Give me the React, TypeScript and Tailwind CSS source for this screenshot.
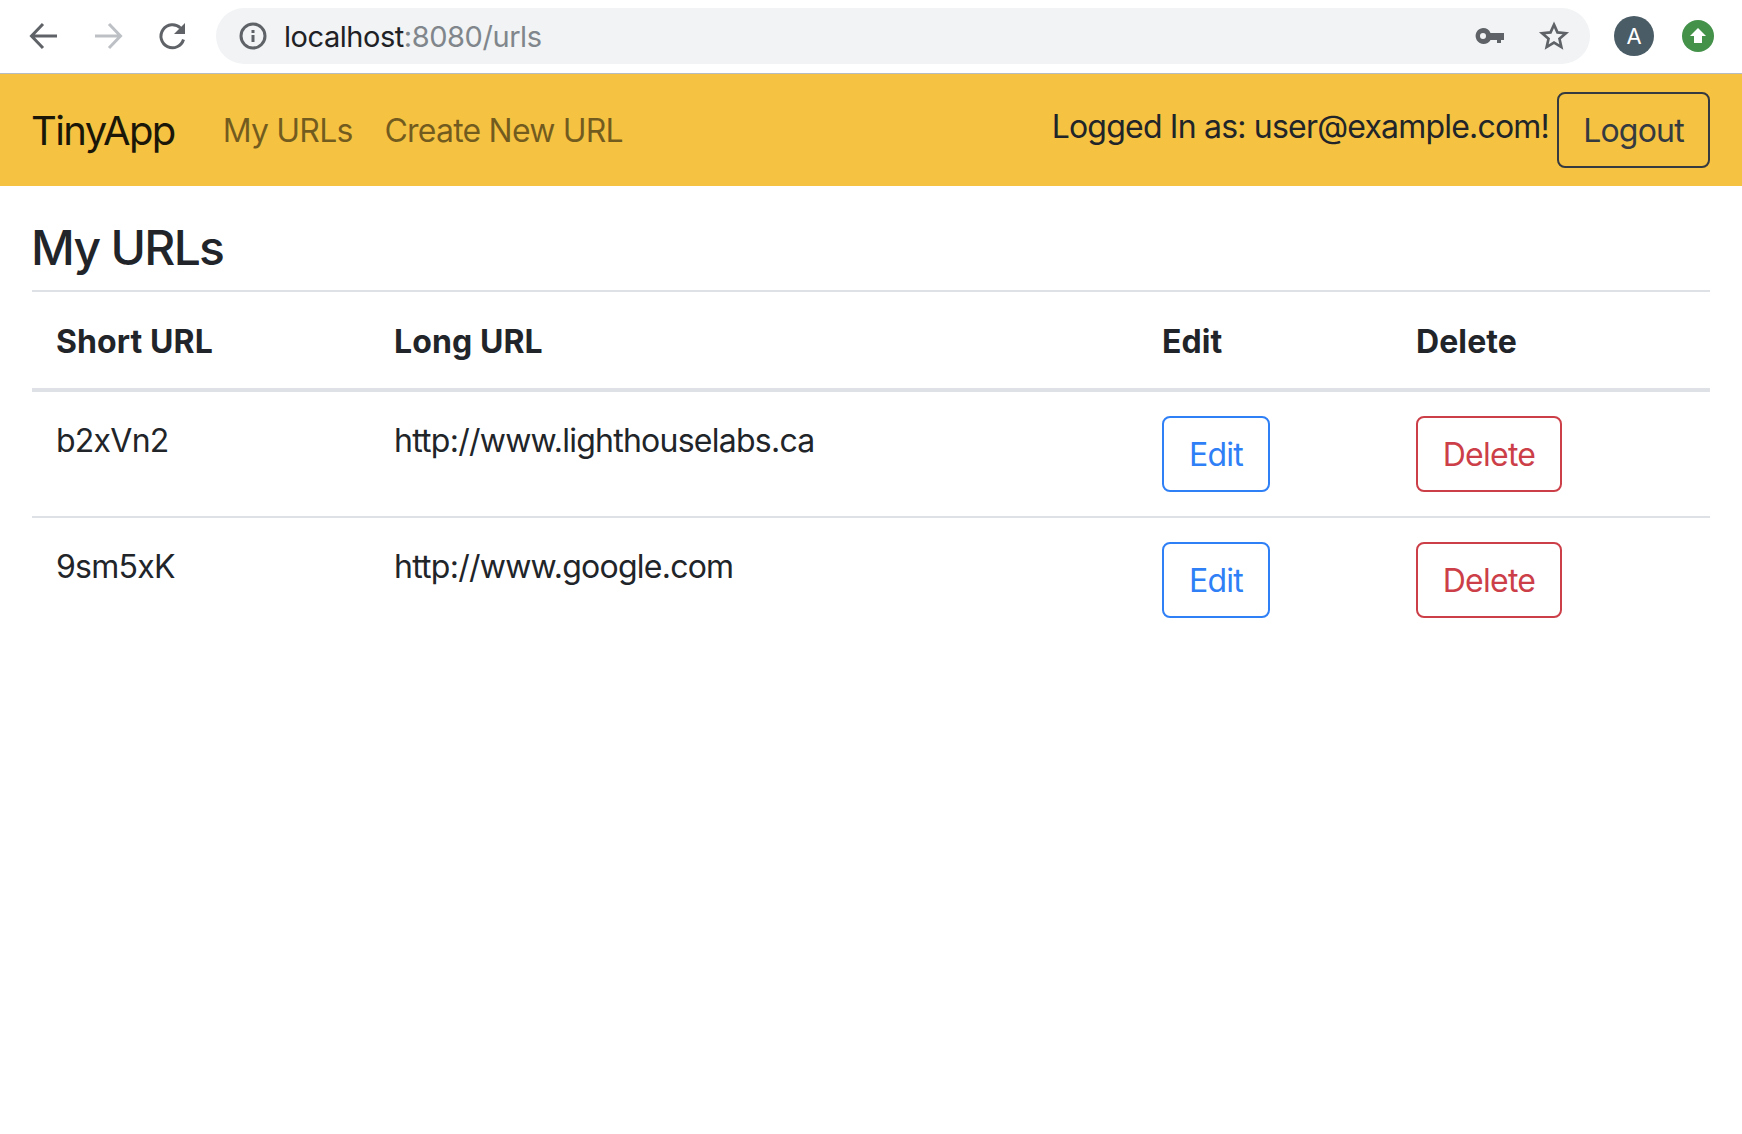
import React from "react";

const rows = [
  ["b2xVn2", "http://www.lighthouselabs.ca"],
  ["9sm5xK", "http://www.google.com"],
];

function Toolbar() {
  return (
    <div className="h-[73px] pb-[1px] flex items-center bg-white pl-[28px] pr-[28px]">
      <svg width="32" height="32" viewBox="0 0 32 32" fill="none" stroke="#5f6368" strokeWidth="3" className="shrink-0">
        <path d="M29 16H4M15 4L3.500 16 15 28" />
      </svg>
      <svg width="32" height="32" viewBox="0 0 32 32" fill="none" stroke="#bdc1c6" strokeWidth="3" className="ml-[32px] shrink-0">
        <path d="M3 16h25M17 4l11.500 12L17 28" />
      </svg>
      <svg width="32" height="32" viewBox="0 0 32 32" fill="none" className="ml-[33px] shrink-0">
        <path d="M26.500 19.500A11.500 11.500 0 1 1 23.500 8" stroke="#5f6368" strokeWidth="3" />
        <path d="M28 3v11H17z" fill="#5f6368" />
      </svg>
      <div className="ml-[27px] h-[56px] flex-1 rounded-[28px] bg-[#f1f3f4] flex items-center pl-[22px] pr-[20px]">
        <svg width="30" height="30" viewBox="0 0 30 30" fill="none" className="shrink-0">
          <circle cx="15" cy="15" r="12" stroke="#5f6368" strokeWidth="3" />
          <path d="M13.500 9h3v3h-3zM13.500 14h3v7h-3z" fill="#5f6368" />
        </svg>
        <div className="ml-[16px] text-[29px] tracking-[-0.45px] leading-none font-['Inter',sans-serif] text-[#202124]">
          localhost<span className="text-[#80868b]">:8080/urls</span>
        </div>
        <div className="flex-1" />
        <svg width="30" height="20" viewBox="0 0 30 20" fill="#5f6368" className="shrink-0">
          <path fillRule="evenodd" d="M8 2a8 8 0 0 1 7.500 5H29v7h-3v3h-4v-3h-6.500A8 8 0 1 1 8 2zm0 5a3 3 0 1 0 0 6 3 3 0 0 0 0-6z" />
        </svg>
        <svg width="32" height="32" viewBox="0 0 24 24" fill="none" stroke="#5f6368" strokeWidth="2" className="ml-[33px] shrink-0">
          <path d="M12 3.500l2.600 5.800 6.300.6-4.800 4.200 1.400 6.200L12 17l-5.500 3.300 1.400-6.200L3.100 9.900l6.300-.6z" />
        </svg>
      </div>
      <div className="ml-[24px] w-[40px] h-[40px] rounded-full bg-[#4a5c66] flex items-center justify-center text-white text-[22px] font-['Inter',sans-serif] shrink-0">
        A
      </div>
      <div className="ml-[28px] w-[32px] h-[32px] rounded-full bg-[#44914a] flex items-center justify-center shrink-0">
        <svg width="18" height="18" viewBox="0 0 18 18" fill="#fff">
          <path d="M9 1l8 8h-4v7H5V9H1z" />
        </svg>
      </div>
    </div>
  );
}

function Navbar() {
  return (
    <nav className="h-[113px] border-t border-[#b5bcc2] bg-[#f5c242] flex items-center pl-[31px] pr-[32px] text-[32px] leading-[48px] tracking-[-0.8px]">
      <span className="mt-[2px] text-[40px] tracking-[-1.6px] text-[#1a1608]">TinyApp</span>
      <span className="mt-[2px] ml-[48px] text-[#1a1608]/60">My URLs</span>
      <span className="mt-[2px] ml-[32px] text-[#1a1608]/60">Create New URL</span>
      <div className="flex-1" />
      <span className="text-[#212529] mb-[6px]">Logged In as: user@example.com!</span>
      <button className="ml-[8px] w-[153px] h-[76px] pt-[2px] rounded-[8px] border-2 border-[#343a40] text-[#343a40]">Logout</button>
    </nav>
  );
}

export default function App() {
  return (
    <div className="min-h-[1134px] bg-white text-[#212529] font-['Inter',sans-serif]">
      <Toolbar />
      <Navbar />
      <main className="px-[32px]">
        <h3 className="pt-[34px] pb-[14px] text-[48px] tracking-[-1.7px] leading-[56px] font-medium border-b-2 border-[#dee2e6]">
          <span className="-ml-[1px] block">My URLs</span>
        </h3>
        <table className="w-full table-fixed text-[32px] leading-[48px] text-left">
          <colgroup>
            <col className="w-[338px]" />
            <col className="w-[768px]" />
            <col className="w-[254px]" />
            <col />
          </colgroup>
          <thead className="tracking-[0.1px]">
            <tr className="border-b-4 border-[#dee2e6]">
              <th className="pt-[26px] pb-[22px] px-[24px] font-bold">Short URL</th>
              <th className="pt-[26px] pb-[22px] px-[24px] font-bold">Long URL</th>
              <th className="pt-[26px] pb-[22px] px-[24px] font-bold">Edit</th>
              <th className="pt-[26px] pb-[22px] px-[24px] font-bold">Delete</th>
            </tr>
          </thead>
          <tbody className="tracking-[-0.75px]">
            {rows.map(([s, l], i) => (
              <tr key={s} className={i === 0 ? "border-b-2 border-[#dee2e6]" : ""}>
                <td className="pt-[25px] pb-[23px] px-[24px] align-top">{s}</td>
                <td className="pt-[25px] pb-[23px] px-[24px] align-top">{l}</td>
                <td className="p-[24px] align-top">
                  <button className="block w-[108px] h-[76px] pt-[2px] rounded-[8px] border-2 border-[#2f7ff6] text-[#2f7ff6]">Edit</button>
                </td>
                <td className="p-[24px] align-top">
                  <button className="block w-[146px] h-[76px] pt-[2px] rounded-[8px] border-2 border-[#cc3f48] text-[#cc3f48]">Delete</button>
                </td>
              </tr>
            ))}
          </tbody>
        </table>
      </main>
    </div>
  );
}
